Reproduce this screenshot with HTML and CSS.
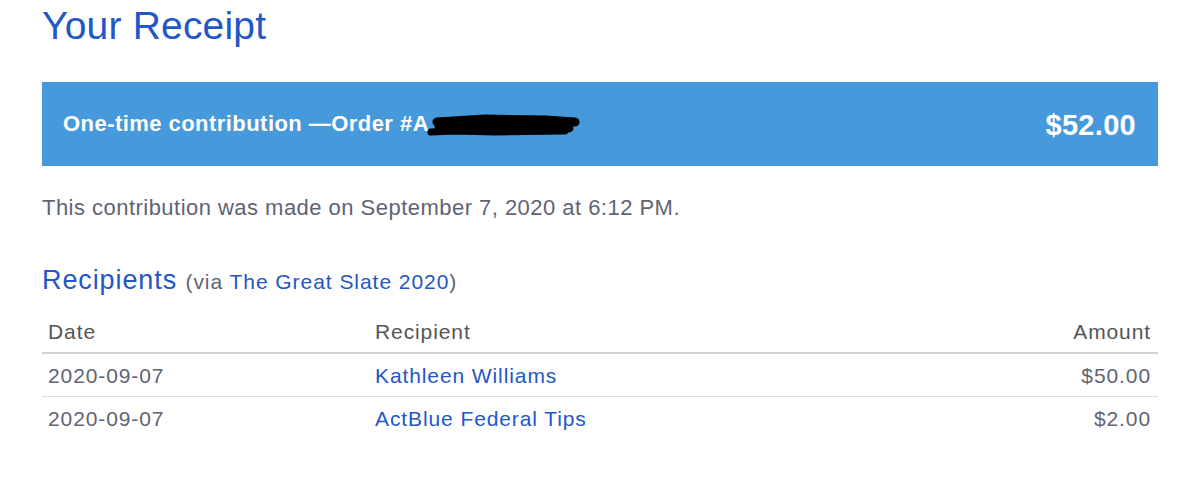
FILE: index.html
```html
<!DOCTYPE html>
<html lang="en">
<head>
<meta charset="utf-8">
<title>Your Receipt</title>
<link rel="stylesheet" href="styles.css">
</head>
<body>
<main class="receipt">
  <h1 class="title">Your Receipt</h1>
  <div class="banner">
    <div class="banner-label">One-time contribution —Order #A<svg class="redact" width="160" height="28" viewBox="0 0 160 28" aria-hidden="true"><path d="M6 22 L30 21 L70 22 L140 21" stroke="#000" stroke-width="7" stroke-linecap="round" fill="none"/><path d="M12 12 L60 9 L120 10 L150 12" stroke="#000" stroke-width="9" stroke-linecap="round" fill="none"/><path d="M14 17 L100 16 L144 18" stroke="#000" stroke-width="9" stroke-linecap="round" fill="none"/></svg></div>
    <div class="banner-amount">$52.00</div>
  </div>
  <p class="note">This contribution was made on September 7, 2020 at 6:12 PM.</p>
  <h2 class="section">Recipients <span class="via">(via <a href="#" class="link">The Great Slate 2020</a>)</span></h2>
  <table class="table">
    <thead>
      <tr><th class="c-date">Date</th><th class="c-rec">Recipient</th><th class="c-amt">Amount</th></tr>
    </thead>
    <tbody>
      <tr><td class="c-date">2020-09-07</td><td class="c-rec"><a href="#" class="link">Kathleen Williams</a></td><td class="c-amt">$50.00</td></tr>
      <tr><td class="c-date">2020-09-07</td><td class="c-rec"><a href="#" class="link">ActBlue Federal Tips</a></td><td class="c-amt">$2.00</td></tr>
    </tbody>
  </table>
</main>
</body>
</html>
```
FILE: styles.css
```css
html, body {
  margin: 0;
  padding: 0;
  background: #ffffff;
}
body {
  font-family: "Liberation Sans", Arial, Helvetica, sans-serif;
}
.receipt {
  padding: 3px 42px 0 42px;
}
.title {
  margin: 0;
  font-size: 39px;
  line-height: 46px;
  font-weight: 400;
  color: #2356c6;
  letter-spacing: 0.2px;
}
.banner {
  margin-top: 33px;
  height: 84px;
  background: #4699da;
  display: flex;
  align-items: center;
  justify-content: space-between;
  padding: 0 22px 0 21px;
  color: #ffffff;
  font-weight: 700;
}
.banner-label {
  font-size: 22px;
  line-height: 24px;
  letter-spacing: 0.45px;
  white-space: nowrap;
  padding-top: 2px;
}
.redact {
  vertical-align: middle;
  margin-left: -4px;
  margin-top: -2px;
}
.banner-amount {
  font-size: 29px;
  line-height: 32px;
  letter-spacing: 0.3px;
  padding-top: 1px;
}
.note {
  margin: 30px 0 0 0;
  font-size: 22px;
  line-height: 24px;
  letter-spacing: 0.47px;
  color: #5f6373;
}
.section {
  margin: 45px 0 0 0;
  font-size: 27px;
  line-height: 30px;
  letter-spacing: 0.9px;
  font-weight: 400;
  color: #2356c6;
}
.via {
  font-size: 21px;
  letter-spacing: 0.95px;
  color: #5f6373;
}
.link {
  color: #2356c6;
  text-decoration: none;
}
.table {
  margin-top: 15px;
  width: 100%;
  border-collapse: collapse;
  font-size: 21px;
  line-height: 24px;
  letter-spacing: 0.9px;
}
.table th {
  font-weight: 400;
  color: #555555;
  text-align: left;
  padding: 8px 6px 8px 6px;
  border-bottom: 2px solid #d2d2d2;
}
.table td {
  color: #5f6373;
  padding: 10px 6px 8px 6px;
  border-bottom: 1px solid #dddddd;
}
.table tbody tr:last-child td {
  border-bottom: none;
}
.c-date {
  width: 315px;
}
.table .c-amt {
  text-align: right;
  padding-right: 7px;
}
```
